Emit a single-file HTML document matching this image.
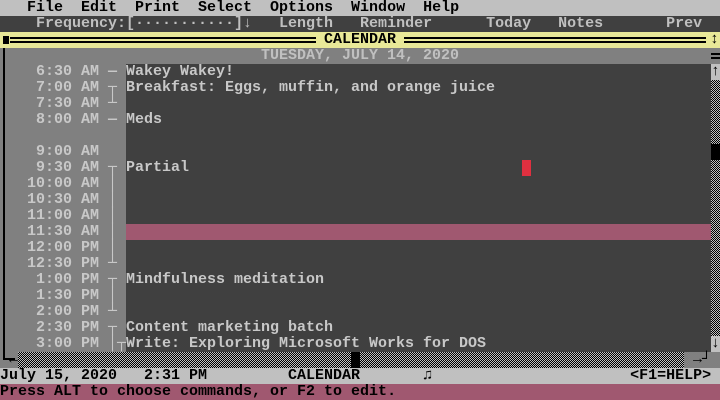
<!DOCTYPE html>
<html><head><meta charset="utf-8"><style>
body{margin:0;width:720px;height:400px;overflow:hidden;background:#404040;position:relative;font-family:"Liberation Mono",monospace;font-size:15px;font-weight:bold;}
.a{position:absolute;}
.t{position:absolute;white-space:pre;line-height:16px;height:16px;}
.st{background:repeating-conic-gradient(#000 0 25%,#c0c0c0 0 50%) 0 0/2px 2px;}
</style></head><body>
<div class="a" style="left:0;top:0;width:720px;height:16px;background:#c0c0c0"></div>
<div class="a" style="left:0;top:16px;width:720px;height:16px;background:#404040"></div>
<div class="a" style="left:0;top:32px;width:720px;height:16px;background:#e8e898"></div>
<div class="a" style="left:0;top:48px;width:720px;height:16px;background:#808080"></div>
<div class="a" style="left:0;top:64px;width:126px;height:288px;background:#808080"></div>
<div class="a" style="left:126px;top:224px;width:585px;height:16px;background:#a05870"></div>
<div class="a" style="left:522px;top:160px;width:9px;height:16px;background:#e03040"></div>
<div class="a st" style="left:711px;top:80px;width:9px;height:256px"></div>
<div class="a" style="left:711px;top:64px;width:9px;height:16px;background:#c0c0c0"></div>
<div class="a" style="left:711px;top:336px;width:9px;height:16px;background:#c0c0c0"></div>
<div class="a" style="left:711px;top:144px;width:9px;height:16px;background:#000"></div>
<div class="a" style="left:0;top:352px;width:720px;height:16px;background:#808080"></div>
<div class="a st" style="left:18px;top:352px;width:666px;height:16px"></div>
<div class="a" style="left:351px;top:352px;width:9px;height:16px;background:#000"></div>
<div class="a" style="left:0;top:368px;width:720px;height:16px;background:#c0c0c0"></div>
<div class="a" style="left:0;top:384px;width:720px;height:16px;background:#a05870"></div>
<div class="a" style="left:3px;top:48px;width:2px;height:312px;background:#000"></div>
<div class="a" style="left:3px;top:358px;width:12px;height:2px;background:#000"></div>
<div class="a" style="left:10px;top:37px;width:306px;height:2px;background:#000"></div>
<div class="a" style="left:10px;top:41px;width:306px;height:2px;background:#000"></div>
<div class="a" style="left:3px;top:36px;width:6px;height:8px;background:#000"></div>
<div class="a" style="left:404px;top:37px;width:302px;height:2px;background:#000"></div>
<div class="a" style="left:404px;top:41px;width:302px;height:2px;background:#000"></div>
<div class="a" style="left:711px;top:53px;width:9px;height:2px;background:#000"></div>
<div class="a" style="left:711px;top:57px;width:9px;height:2px;background:#000"></div>

<div class="t" style="left:0;top:0;color:#000">   File  Edit  Print  Select  Options  Window  Help</div>
<div class="t" style="left:0;top:16px;color:#c0c0c0">    Frequency:[···········]↓   Length   Reminder      Today   Notes       Prev</div>
<div class="t" style="left:324px;top:32px;color:#000">CALENDAR</div>
<div class="t" style="left:710px;top:32px;color:#000">↕</div>
<div class="t" style="left:261px;top:48px;color:#c0c0c0">TUESDAY, JULY 14, 2020</div>
<div class="t" style="left:711px;top:64px;color:#000">↑</div>
<div class="t" style="left:711px;top:336px;color:#000">↓</div>
<div class="t" style="left:9px;top:352px;color:#000">←</div>
<div class="t" style="left:693px;top:352px;color:#000">→┘</div>

<div class="t" style="left:0;top:64px;color:#c8c8c8;height:288px">    6:30 AM —
    7:00 AM ┬
    7:30 AM ┴
    8:00 AM —

    9:00 AM
    9:30 AM ┬
   10:00 AM │
   10:30 AM │
   11:00 AM │
   11:30 AM │
   12:00 PM │
   12:30 PM ┴
    1:00 PM ┬
    1:30 PM │
    2:00 PM ┴
    2:30 PM ┬
    3:00 PM │┬</div>
<div class="t" style="left:126px;top:64px;color:#c8c8c8;height:288px">Wakey Wakey!
Breakfast: Eggs, muffin, and orange juice

Meds


Partial






Mindfulness meditation


Content marketing batch
Write: Exploring Microsoft Works for DOS</div>

<div class="t" style="left:0;top:368px;color:#000">July 15, 2020   2:31 PM         CALENDAR       ♫                      &lt;F1=HELP&gt;</div>
<div class="t" style="left:0;top:384px;color:#000">Press ALT to choose commands, or F2 to edit.</div>
</body></html>
